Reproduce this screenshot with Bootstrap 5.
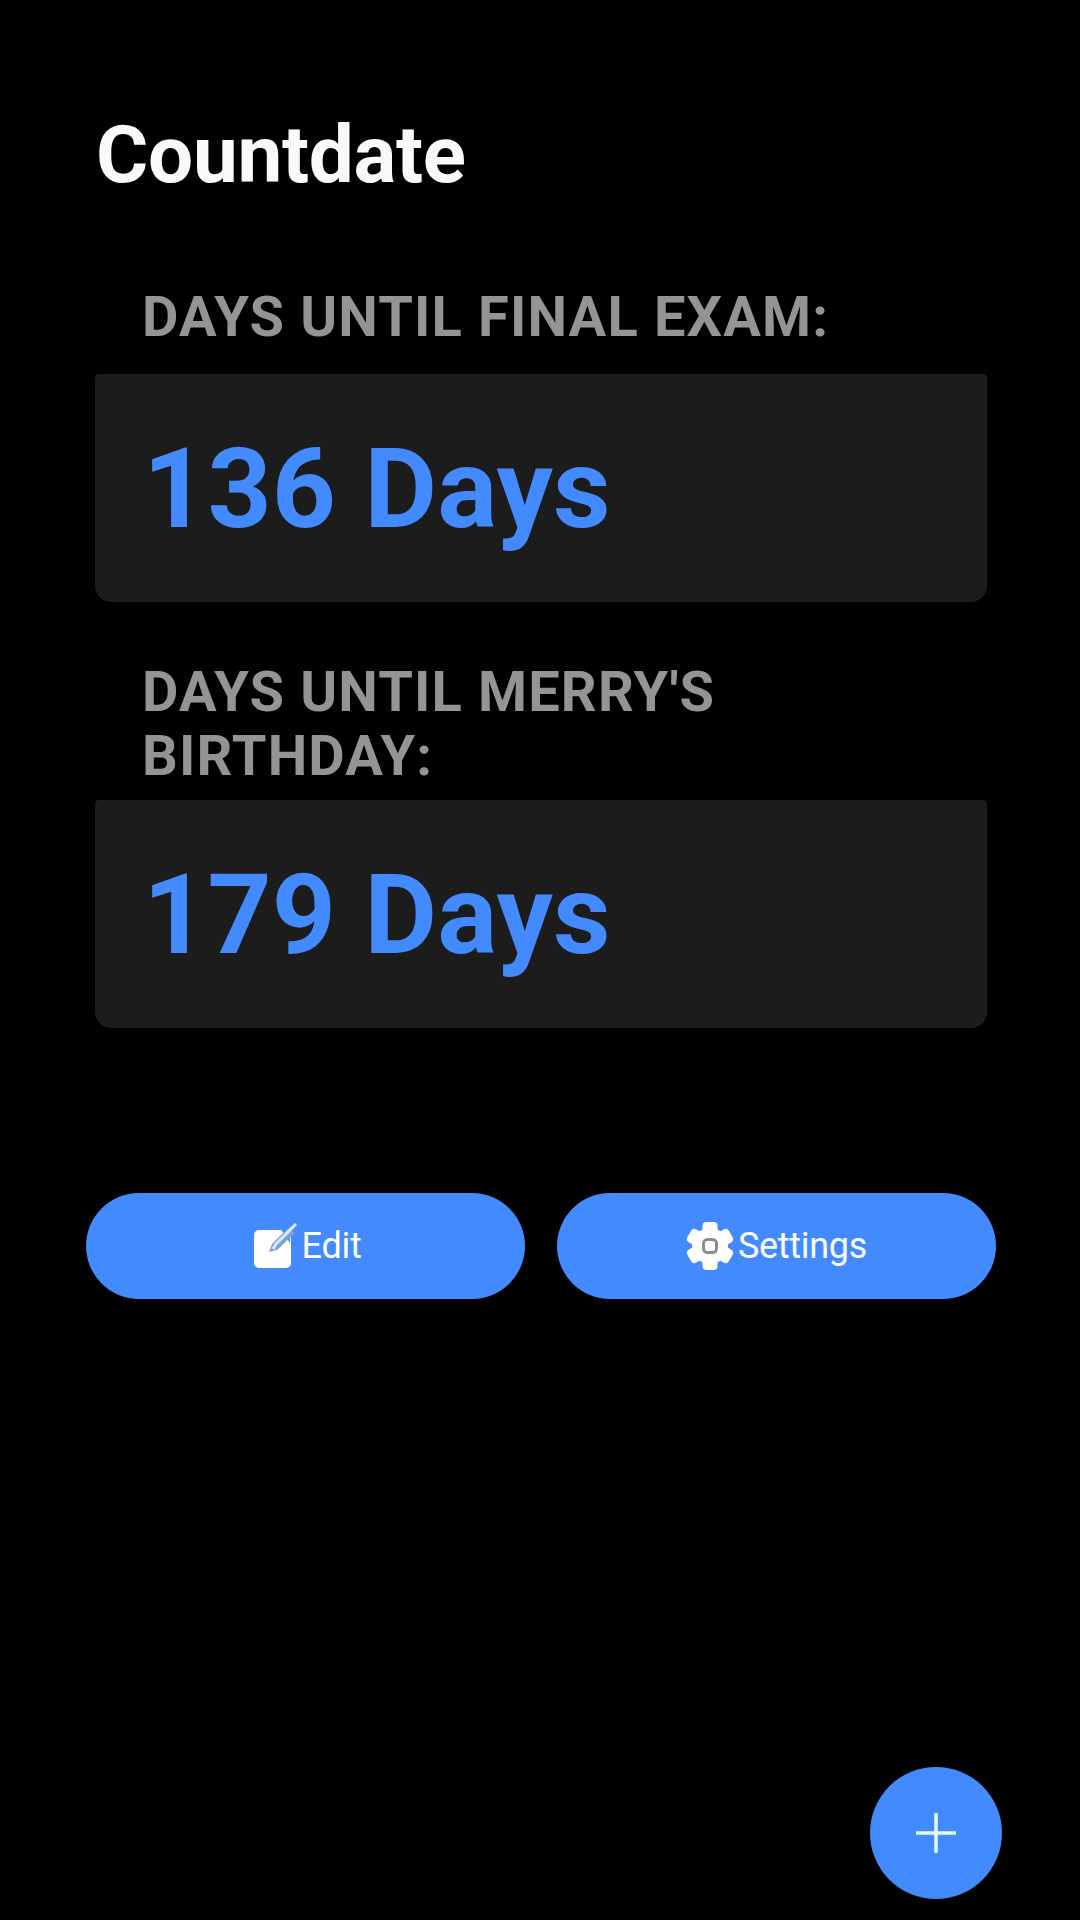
<!DOCTYPE html>
<html lang="en">
<head>
<meta charset="utf-8">
<meta name="viewport" content="width=device-width, initial-scale=1">
<title>Countdate</title>
<link rel="stylesheet" href="https://cdn.jsdelivr.net/npm/bootstrap@5.3.0/dist/css/bootstrap.min.css">
<style>
  :root { --accent: #448aff; --panel: #1c1c1c; }
  body { background: #000; font-family: Roboto, "Liberation Sans", sans-serif; }
  .screen { height: 1920px; padding: 108px 84px 21px 86px; }
  .app-title { font-size: 80px; line-height: 94px; letter-spacing: -.3px; color: #fafafa; margin: 0 0 83px 10px; }
  .counter { margin: 0 9px; }
  .counter + .counter { margin-top: 58px; }
  .counter-label { font-size: 56px; line-height: 64px; letter-spacing: 1.15px; color: #949494; padding: 0 48px 25px 47px; margin: 0; }
  .counter + .counter .counter-label { padding-bottom: 12px; }
  .counter-box { height: 228px; background: var(--panel); color: var(--accent); border-radius: 4px 4px 16px 16px;
    font-size: 112px; line-height: 130px; letter-spacing: .15px; padding: 1px 48px 0; }
  .pill { height: 106px; background: var(--accent); color: #fff; font-size: 36px; line-height: 42px; letter-spacing: -.3px; gap: 4px; }
  .pill:hover, .fab:hover { background: #3b7ce6; color: #fff; }
  .pill-row { gap: 32px; margin-top: 165px; }
  .fab { width: 132px; height: 132px; background: var(--accent); margin-right: -6px; }
</style>
</head>
<body>
<main class="screen d-flex flex-column overflow-hidden">
  <h1 class="app-title fw-bold">Countdate</h1>

  <section class="counter">
    <h2 class="counter-label fw-bold text-uppercase">Days until final exam:</h2>
    <div class="counter-box fw-bold d-flex align-items-center">136 Days</div>
  </section>

  <section class="counter">
    <h2 class="counter-label fw-bold text-uppercase">Days until Merry's birthday:</h2>
    <div class="counter-box fw-bold d-flex align-items-center">179 Days</div>
  </section>

  <div class="pill-row d-flex">
    <button class="pill btn border-0 rounded-pill flex-fill w-50 p-0 d-flex align-items-center justify-content-center">
      <svg width="48" height="48" viewBox="0 0 48 48" aria-hidden="true">
        <rect x="4" y="8" width="37" height="38" rx="5" fill="#fff"/>
        <path d="M30 6h10v15z" fill="#448aff"/>
        <path d="M19 30l3-8L39 5l6 6-18 17z" fill="#7d9fdc"/>
        <path d="M23 27l3-5L46 2" fill="none" stroke="#d9ebff" stroke-width="3"/>
      </svg>
      <span>Edit</span>
    </button>
    <button class="pill btn border-0 rounded-pill flex-fill w-50 p-0 d-flex align-items-center justify-content-center">
      <svg width="48" height="48" viewBox="0 0 48 48" aria-hidden="true">
        <g fill="#fff">
          <circle cx="24" cy="24" r="18"/>
          <rect x="16.500" y="0" width="15" height="48" rx="4"/>
          <rect x="16.500" y="0" width="15" height="48" rx="4" transform="rotate(60 24 24)"/>
          <rect x="16.500" y="0" width="15" height="48" rx="4" transform="rotate(120 24 24)"/>
        </g>
        <rect x="17.500" y="17.500" width="13" height="13" rx="4" fill="none" stroke="#8b8d92" stroke-width="3"/>
      </svg>
      <span>Settings</span>
    </button>
  </div>

  <button class="fab btn border-0 rounded-circle p-0 mt-auto ms-auto d-flex align-items-center justify-content-center" aria-label="Add">
    <svg width="42" height="42" viewBox="0 0 42 42"><path d="M21 1v40M1 21h40" stroke="#e4ffff" stroke-width="3.500"/></svg>
  </button>
</main>
<script src="https://cdn.jsdelivr.net/npm/bootstrap@5.3.0/dist/js/bootstrap.bundle.min.js"></script>
</body>
</html>
